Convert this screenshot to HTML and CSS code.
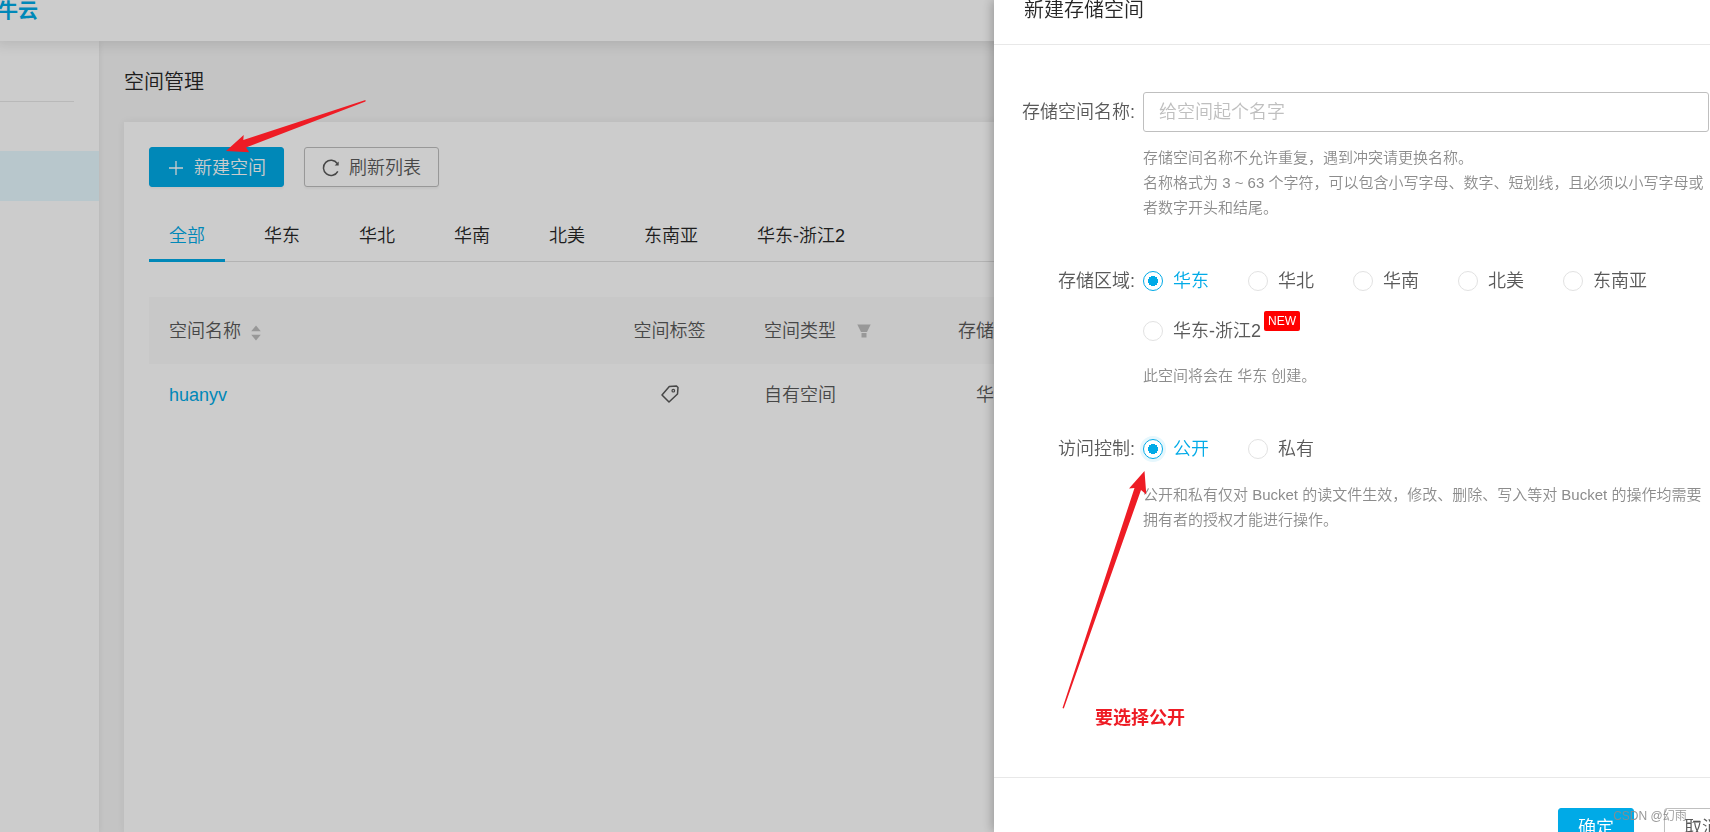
FILE: index.html
```html
<!DOCTYPE html>
<html lang="zh-CN">
<head>
<meta charset="utf-8">
<title>空间管理</title>
<link rel="stylesheet" href="styles.css">
</head>
<body>
<div class="app">
  <header class="topbar"><a class="logo" href="#">牛云</a></header>
  <div class="body">
    <nav class="sidebar" aria-label="主导航">
      <hr class="sidebar-line">
      <a class="sidebar-item" href="#" aria-label="空间管理"></a>
    </nav>
    <main class="main">
      <h1 class="page-title">空间管理</h1>
      <section class="card">
        <div class="toolbar">
          <button class="btn btn-primary" type="button">
            <svg class="icon" viewBox="0 0 18 18"><path d="M9 2v14M2 9h14" fill="none" stroke="currentColor" stroke-width="1.300"/></svg>
            新建空间
          </button>
          <button class="btn" type="button">
            <svg class="icon" viewBox="0 0 18 18"><path d="M15.800 12.300A7.600 7.600 0 1 1 15.300 4.500" fill="none" stroke="currentColor" stroke-width="1.500"/><path d="M16.700 2.500v4h-4z" fill="currentColor"/></svg>
            刷新列表
          </button>
        </div>
        <nav class="tabs" aria-label="区域">
          <a class="tab tab-active" href="#">全部</a>
          <a class="tab" href="#">华东</a>
          <a class="tab" href="#">华北</a>
          <a class="tab" href="#">华南</a>
          <a class="tab" href="#">北美</a>
          <a class="tab" href="#">东南亚</a>
          <a class="tab" href="#">华东-浙江2</a>
        </nav>
        <table class="table">
          <colgroup><col class="col-name"><col class="col-tag"><col class="col-type"><col class="col-region"><col></colgroup>
          <thead>
            <tr>
              <th><span class="th-inner">空间名称
                <svg class="sort" viewBox="0 0 10 16"><path d="M5 0.500l4.800 5.700H.2zM5 15.500L.2 9.800h9.600z" fill="#bfbfbf"/></svg></span></th>
              <th class="center">空间标签</th>
              <th><span class="th-inner th-filter">空间类型
                <svg class="funnel" viewBox="0 0 14 14"><path d="M.3.500h13.400L10 8H4zM4.500 9h5v4.500h-5z" fill="#bfbfbf"/></svg></span></th>
              <th class="center">存储区域</th>
              <th></th>
            </tr>
          </thead>
          <tbody>
            <tr>
              <td><a class="link" href="#">huanyv</a></td>
              <td class="center"><svg class="tag" viewBox="0 0 18 18"><path d="M8.300 1.500L15.500 1 17 2.500 16.500 9 8 17 1 10z" fill="none" stroke="currentColor" stroke-width="1.500" stroke-linejoin="round"/><circle cx="12.300" cy="5.700" r="1.300" fill="none" stroke="currentColor" stroke-width="1.200"/></svg></td>
              <td>自有空间</td>
              <td class="center">华东</td>
              <td></td>
            </tr>
          </tbody>
        </table>
      </section>
    </main>
  </div>
</div>

<div class="mask"></div>

<form class="drawer">
  <h2 class="drawer-title">新建存储空间</h2>
  <div class="drawer-body">
    <div class="field">
      <label class="field-label" for="bucket">存储空间名称:</label>
      <div class="field-main">
        <input class="text-input" id="bucket" type="text" placeholder="给空间起个名字">
        <p class="hint">存储空间名称不允许重复，遇到冲突请更换名称。<br>名称格式为 3 ~ 63 个字符，可以包含小写字母、数字、短划线，且必须以小写字母或者数字开头和结尾。</p>
      </div>
    </div>
    <div class="field" role="radiogroup" aria-labelledby="region-label">
      <span class="field-label" id="region-label">存储区域:</span>
      <div class="field-main">
        <div class="radios">
          <label class="radio"><input type="radio" name="region" checked><span>华东</span></label>
          <label class="radio"><input type="radio" name="region"><span>华北</span></label>
          <label class="radio"><input type="radio" name="region"><span>华南</span></label>
          <label class="radio"><input type="radio" name="region"><span>北美</span></label>
          <label class="radio"><input type="radio" name="region"><span>东南亚</span></label>
          <label class="radio"><input type="radio" name="region"><span>华东-浙江2</span><em class="badge">NEW</em></label>
        </div>
        <p class="hint hint-region">此空间将会在 华东 创建。</p>
      </div>
    </div>
    <div class="field" role="radiogroup" aria-labelledby="access-label">
      <span class="field-label" id="access-label">访问控制:</span>
      <div class="field-main">
        <div class="radios">
          <label class="radio"><input class="focused" type="radio" name="access" checked><span>公开</span></label>
          <label class="radio"><input type="radio" name="access"><span>私有</span></label>
        </div>
        <p class="hint">公开和私有仅对 Bucket 的读文件生效，修改、删除、写入等对 Bucket 的操作均需要拥有者的授权才能进行操作。</p>
      </div>
    </div>
  </div>
  <footer class="drawer-footer">
    <button class="btn btn-primary" type="button">确定</button>
    <button class="btn" type="button">取消</button>
  </footer>
</form>

<svg class="arrow arrow-create" viewBox="0 0 142 54"><path d="M1 52L18.700 36 18.300 41 140.500 1v1.500L21 48.500l3.300 4.800z" fill="#ee1c25"/></svg>
<svg class="arrow arrow-public" viewBox="0 0 84 240"><path d="M82.500 1L84.300 24.500 79 20 1.800 238.500 0.500 238 72.500 18 67 18.500z" fill="#ee1c25"/></svg>
<p class="note">要选择公开</p>
<p class="watermark">CSDN @幻雨__</p>
</body>
</html>
```
FILE: styles.css
```css
* { box-sizing: border-box; }

body {
  margin: 0;
  height: 100vh;
  overflow: hidden;
  font-family: "Liberation Sans", "Noto Sans CJK SC", sans-serif;
  font-size: 18px;
  line-height: 28px;
  font-weight: 350;
  color: #595959;
}

h1, h2, p { margin: 0; font-weight: 350; }
a { color: inherit; text-decoration: none; }

.app { display: flex; flex-direction: column; height: 100vh; }

.topbar {
  position: relative;
  height: 41px;
  flex: none;
  background: #fff;
  box-shadow: 0 0 12px 4px rgba(0, 0, 0, 0.1);
}
.logo {
  display: block;
  margin-left: -2px;
  font-size: 20px;
  line-height: 22px;
  font-weight: 700;
  color: #00aae7;
}

.body { display: flex; flex: 1; background: #f5f5f5; }

.sidebar { width: 99px; flex: none; background: #fff; padding-top: 60px; box-shadow: 0 0 6px rgba(0, 0, 0, 0.08); }
.sidebar-line { width: 74px; margin: 0 0 49px; border: 0; border-top: 1px solid #e8e8e8; }
.sidebar-item { display: block; height: 50px; background: #e6f9ff; }

.main { flex: 1; display: flex; flex-direction: column; padding: 27px 25px 0; }
.page-title { font-size: 20px; line-height: 28px; margin-bottom: 26px; color: #262626; }

.card { flex: 1; padding: 25px; background: #fff; box-shadow: 0 0 8px rgba(0, 0, 0, 0.06); }
.toolbar { display: flex; gap: 20px; }

.btn {
  display: flex;
  align-items: center;
  justify-content: center;
  gap: 9px;
  height: 40px;
  padding: 1px 17px 0;
  border: 1px solid #bfbfbf;
  border-radius: 3px;
  background: #fff;
  box-shadow: 0 2px 2px rgba(0, 0, 0, 0.04);
  font: inherit;
  color: #595959;
  white-space: nowrap;
}
.btn-primary { border-color: #00aae7; background: #00aae7; color: #fff; }
.icon { width: 18px; height: 18px; }

.tabs { display: flex; gap: 19px; margin-top: 20px; border-bottom: 1px solid #e0e0e0; }
.tab { height: 55px; margin-bottom: -1px; padding: 15px 20px 0; color: #262626; }
.tab-active { border-bottom: 3px solid #00aae7; color: #00aae7; }

.table { width: 100%; margin-top: 35px; border-collapse: collapse; table-layout: fixed; }
.col-name { width: 446px; }
.col-tag { width: 149px; }
.col-type { width: 154px; }
.col-region { width: 192px; }
.table th { height: 67px; padding: 1px 20px 0; background: #fafafa; font-weight: 350; text-align: left; }
.table td { height: 62px; padding: 0 20px; }
.table .center { text-align: center; }
.th-inner { display: flex; align-items: center; gap: 10px; white-space: nowrap; }
.th-filter { gap: 21px; }
.sort { width: 10px; height: 16px; flex: none; margin-top: 3px; }
.funnel { width: 14px; height: 14px; flex: none; }
.tag { width: 18px; height: 18px; vertical-align: -2px; }
.link { color: #00aae7; }

.mask { position: fixed; inset: 0; background: rgba(0, 0, 0, 0.2); }

.drawer {
  position: fixed;
  top: 0;
  right: 0;
  bottom: 0;
  width: 716px;
  max-width: 100%;
  display: flex;
  flex-direction: column;
  overflow: hidden;
  background: #fff;
  box-shadow: -2px 0 10px rgba(0, 0, 0, 0.25);
}
.drawer-title { height: 45px; flex: none; padding-left: 30px; border-bottom: 1px solid #e8e8e8; font-size: 20px; line-height: 20px; color: #262626; }
.drawer-body { flex: 1; padding-top: 47px; }
.field { display: grid; grid-template-columns: 149px 1fr; margin-bottom: 41px; }
.field-label { padding: 6px 8px 0 0; text-align: right; white-space: nowrap; }
.field-main { padding-right: 1px; }

.text-input { display: block; width: 100%; height: 40px; padding: 0 15px; border: 1px solid #bfbfbf; border-radius: 3px; font: inherit; color: #595959; }
.text-input::placeholder { color: #bfbfbf; }
.hint { margin-top: 13px; font-size: 15px; line-height: 25px; color: #8c8c8c; }

.radios { display: flex; flex-wrap: wrap; gap: 10px 39px; }
.radio { display: flex; align-items: center; gap: 10px; height: 40px; }
.radio input {
  appearance: none;
  width: 20px;
  height: 20px;
  margin: 0;
  border: 1px solid #e2e2e2;
  border-radius: 50%;
  background: #fff;
}
.radio input:checked { border-color: #00aae7; background: radial-gradient(circle, #00aae7 5px, #fff 5px); }
.radio .focused { box-shadow: 0 0 0 3px #e6f7fd; }
.radio input:checked + span { color: #00aae7; }
.badge { align-self: flex-start; margin-left: -7px; padding: 0 4px; border-radius: 2px; background: #f00; color: #fff; font-size: 12px; line-height: 20px; font-style: normal; font-weight: 400; }
.hint-region { margin-top: 12px; }

.drawer-footer { display: flex; justify-content: flex-end; gap: 30px; height: 55px; flex: none; margin-right: -30px; padding-top: 30px; border-top: 1px solid #e8e8e8; }
.drawer-footer .btn { flex: none; padding: 0 19px; }

.arrow { position: absolute; overflow: visible; pointer-events: none; }
.arrow-create { left: 225px; top: 99px; width: 142px; height: 54px; }
.arrow-public { left: 1062px; top: 470px; width: 84px; height: 240px; }
.note { position: absolute; left: 1095px; top: 704px; font-weight: 700; color: #ee1c25; }
.watermark { position: absolute; right: 10px; bottom: 6px; font-size: 12px; line-height: 20px; color: rgba(140, 140, 140, 0.9); }
```
